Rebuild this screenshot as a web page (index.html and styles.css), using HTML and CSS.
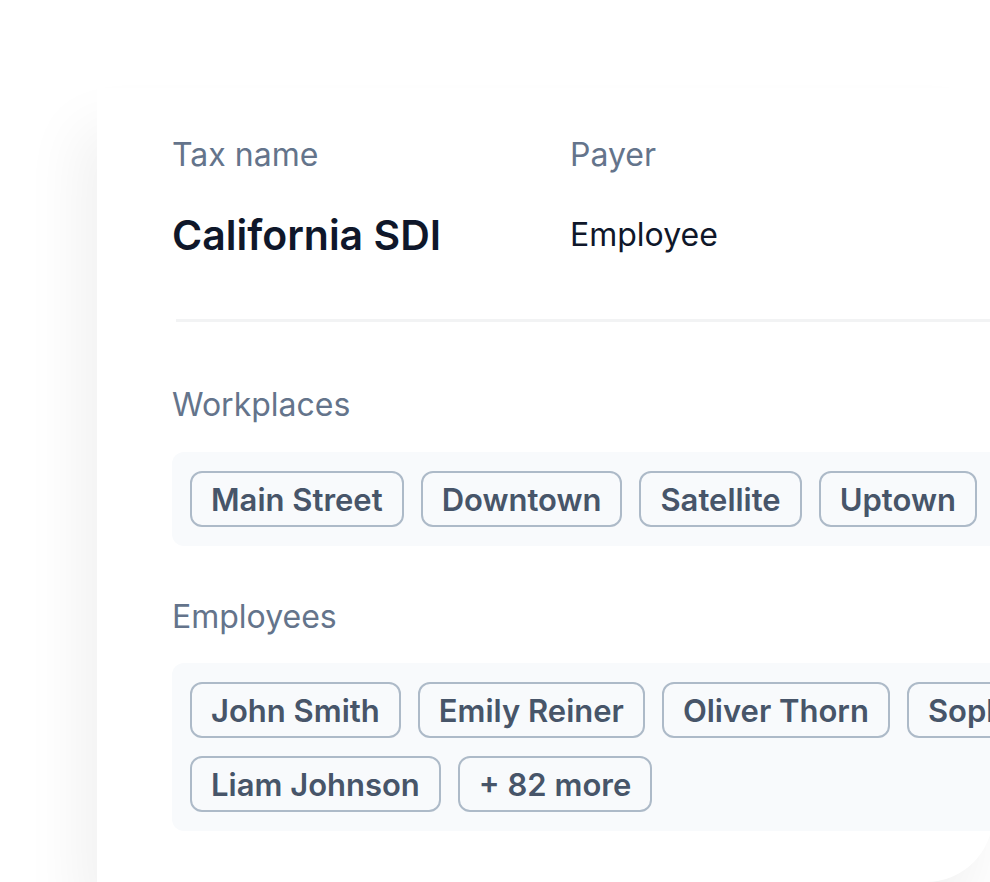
FILE: index.html
```html
<!DOCTYPE html>
<html lang="en">
<head>
<meta charset="utf-8">
<title>California SDI</title>
<link rel="stylesheet" href="styles.css">
</head>
<body>
<div class="stage">
  <section class="card">
    <div class="summary">
      <div class="field">
        <div class="label">Tax name</div>
        <div class="title">California SDI</div>
      </div>
      <div class="field">
        <div class="label">Payer</div>
        <div class="value">Employee</div>
      </div>
    </div>
    <hr class="divider">
    <div class="group">
      <div class="label">Workplaces</div>
      <div class="tagbox">
        <span class="tag">Main Street</span>
        <span class="tag">Downtown</span>
        <span class="tag">Satellite</span>
        <span class="tag">Uptown</span>
        <span class="tag">Harbor</span>
      </div>
    </div>
    <div class="group">
      <div class="label">Employees</div>
      <div class="tagbox">
        <span class="tag">John Smith</span>
        <span class="tag">Emily Reiner</span>
        <span class="tag">Oliver Thorn</span>
        <span class="tag">Sophia Lee</span>
        <span class="tag">Liam Johnson</span>
        <span class="tag">+ 82 more</span>
      </div>
    </div>
  </section>
</div>
</body>
</html>
```

FILE: styles.css
```css
html, body {
  margin: 0;
  padding: 0;
  background: #ffffff;
  overflow: hidden;
  width: 990px;
  height: 882px;
}

body {
  font-family: Inter, "Noto Sans", "Liberation Sans", sans-serif;
}

.stage {
  padding: 88px 0 0 97px;
}

.card {
  box-sizing: border-box;
  width: 896px;
  height: 794px;
  background: #ffffff;
  border-radius: 0 0 67px 0;
  box-shadow: -18px 40px 60px rgba(0, 0, 0, 0.06);
  padding: 47px 0 0 75px;
  overflow: hidden;
}

.summary {
  display: grid;
  grid-template-columns: 398px auto;
}

.label {
  font-size: 32px;
  line-height: 40px;
  color: #64748b;
  font-weight: 400;
}

.title {
  margin-top: 36px;
  font-size: 41px;
  line-height: 48px;
  font-weight: 600;
  color: #0f172a;
}

.value {
  margin-top: 36px;
  font-size: 32px;
  line-height: 48px;
  font-weight: 400;
  color: #0f172a;
}

.divider {
  margin: 60px 0 0 4px;
  border: 0;
  height: 3px;
  background: #f2f3f4;
  width: 1000px;
}

.group {
  margin-top: 63px;
}

.group + .group {
  margin-top: 51px;
}

.tagbox {
  margin-top: 27px;
  width: 1100px;
  box-sizing: border-box;
  background: #f8fafc;
  border-radius: 12px;
  padding: 19px 18px;
  display: flex;
  flex-wrap: wrap;
  gap: 18px 17px;
}

.group + .group .tagbox {
  margin-top: 26px;
}

.tag {
  box-sizing: border-box;
  height: 56px;
  display: inline-flex;
  align-items: center;
  padding: 0 19px;
  border: 2px solid #adbac8;
  border-radius: 12px;
  font-size: 31px;
  font-weight: 600;
  color: #475569;
  white-space: nowrap;
}
```
